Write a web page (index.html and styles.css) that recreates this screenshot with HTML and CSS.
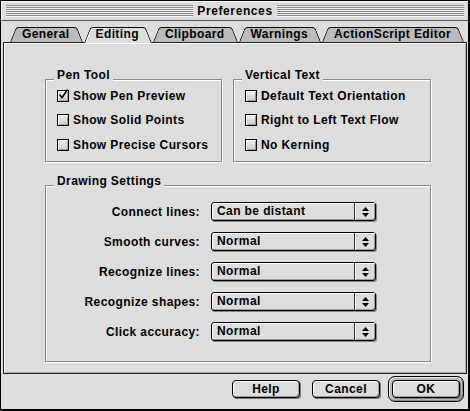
FILE: index.html
```html
<!DOCTYPE html>
<html lang="en">
<head>
    <meta charset="UTF-8">
    <title>Preferences</title>
    <link rel="stylesheet" href="styles.css">
</head>
<body>
    <div class="window">
        <div class="titlebar">
            <div class="stripes"></div>
            <div class="window-title">Preferences</div>
            <div class="stripes"></div>
        </div>

        <div class="tabs">
            <div class="tab">General</div>
            <div class="tab active">Editing</div>
            <div class="tab">Clipboard</div>
            <div class="tab">Warnings</div>
            <div class="tab">ActionScript Editor</div>
        </div>

        <div class="pane">
            <div class="group-row">
                <div class="group pen-tool">
                    <div class="group-title">Pen Tool</div>
                    <div class="checks">
                        <div class="check">
                            <span class="box">
                                <svg width="12" height="12" viewBox="0 0 12 12"><path d="M2.5 5.5 L5 8.7 L10.5 0.5" fill="none" stroke="#000" stroke-width="1.6"/></svg>
                            </span>
                            Show Pen Preview
                        </div>
                        <div class="check"><span class="box"></span>Show Solid Points</div>
                        <div class="check"><span class="box"></span>Show Precise Cursors</div>
                    </div>
                </div>
                <div class="group vertical-text">
                    <div class="group-title">Vertical Text</div>
                    <div class="checks">
                        <div class="check"><span class="box"></span>Default Text Orientation</div>
                        <div class="check"><span class="box"></span>Right to Left Text Flow</div>
                        <div class="check"><span class="box"></span>No Kerning</div>
                    </div>
                </div>
            </div>

            <div class="group drawing">
                <div class="group-title">Drawing Settings</div>
                <div class="settings">
                    <div class="setting-label">Connect lines:</div>
                    <div class="popup"><span class="popup-value">Can be distant</span><span class="popup-arrows"><svg width="7" height="10" viewBox="0 0 7 10"><path d="M3.5 0 L7 4 L0 4 Z M0 6 L7 6 L3.5 10 Z" fill="#000"/></svg></span></div>

                    <div class="setting-label">Smooth curves:</div>
                    <div class="popup"><span class="popup-value">Normal</span><span class="popup-arrows"><svg width="7" height="10" viewBox="0 0 7 10"><path d="M3.5 0 L7 4 L0 4 Z M0 6 L7 6 L3.5 10 Z" fill="#000"/></svg></span></div>

                    <div class="setting-label">Recognize lines:</div>
                    <div class="popup"><span class="popup-value">Normal</span><span class="popup-arrows"><svg width="7" height="10" viewBox="0 0 7 10"><path d="M3.5 0 L7 4 L0 4 Z M0 6 L7 6 L3.5 10 Z" fill="#000"/></svg></span></div>

                    <div class="setting-label">Recognize shapes:</div>
                    <div class="popup"><span class="popup-value">Normal</span><span class="popup-arrows"><svg width="7" height="10" viewBox="0 0 7 10"><path d="M3.5 0 L7 4 L0 4 Z M0 6 L7 6 L3.5 10 Z" fill="#000"/></svg></span></div>

                    <div class="setting-label">Click accuracy:</div>
                    <div class="popup"><span class="popup-value">Normal</span><span class="popup-arrows"><svg width="7" height="10" viewBox="0 0 7 10"><path d="M3.5 0 L7 4 L0 4 Z M0 6 L7 6 L3.5 10 Z" fill="#000"/></svg></span></div>
                </div>
            </div>
        </div>

        <div class="footer">
            <button class="btn help">Help</button>
            <button class="btn cancel">Cancel</button>
            <div class="default-ring"><button class="btn">OK</button></div>
        </div>
    </div>
</body>
</html>
```

FILE: styles.css
```css
/* Platinum style preferences dialog */
* {
    box-sizing: border-box;
}
body {
    margin: 0;
    background-color: #dddddd;
    font-family: "Liberation Sans", Arial, sans-serif;
    font-size: 12px;
    font-weight: bold;
    letter-spacing: 0.4px;
    color: #000;
}
.window {
    width: 470px;
    height: 411px;
    border: 1px solid #000;
    border-right-width: 2px;
    border-bottom-width: 2px;
    background-color: #dddddd;
    display: flex;
    flex-direction: column;
}

/* title bar */
.titlebar {
    height: 20px;
    flex: none;
    display: flex;
    align-items: center;
    gap: 4px;
    padding: 0 4px 0 5px;
    border-bottom: 1px solid #555;
    box-shadow: inset 1px 1px 0 #fff;
}
.stripes {
    flex: 1;
    height: 12px;
    background: repeating-linear-gradient(to bottom, #8a8a8a 0 1px, #f2f2f2 1px 2px);
}
.window-title {
    letter-spacing: 0.6px;
}

/* tabs */
.tabs {
    height: 21px;
    flex: none;
    display: flex;
    align-items: flex-end;
    gap: 1px;
    padding-left: 9px;
    position: relative;
    z-index: 1;
}
.tab {
    position: relative;
    height: 15px;
    line-height: 15px;
    padding: 0 13px 0 12px;
}
.tab::before,
.tab::after {
    content: "";
    position: absolute;
    top: 0;
    bottom: 0;
    width: 55%;
    background-color: #bbbbbb;
    border-top: 1px solid #000;
    z-index: -1;
}
.tab::before {
    left: 0;
    border-left: 1px solid #000;
    border-top-left-radius: 3px;
    transform: skewX(-21.8deg);
    transform-origin: bottom left;
}
.tab::after {
    right: 0;
    border-right: 1px solid #000;
    border-top-right-radius: 3px;
    transform: skewX(21.8deg);
    transform-origin: bottom right;
}
.tab.active {
    height: 16px;
    margin-bottom: -1px;
}
.tab.active::before,
.tab.active::after {
    background-color: #dddddd;
}
.tab.active::before {
    box-shadow: inset 1px 1px 0 #fff;
}

/* pane */
.pane {
    height: 332px;
    flex: none;
    margin: 0 1px 0 2px;
    border: 1px solid #222;
    box-shadow: inset 1px 1px 0 #fff, inset -1px -1px 0 #aaa;
    padding: 36px 0 0 41px;
}
.group-row {
    display: flex;
    gap: 11px;
}
.group {
    border: 1px solid #888;
    box-shadow: 1px 1px 0 #fff, inset 1px 1px 0 #fff;
    display: flex;
    flex-direction: column;
}
.group-title {
    align-self: flex-start;
    margin: -12px 0 0 8px;
    padding: 0 3px;
    line-height: 14px;
    background-color: #dddddd;
}
.pen-tool {
    width: 177px;
    height: 83px;
}
.vertical-text {
    width: 198px;
    height: 83px;
}
.checks {
    margin: 2px 0 0 11px;
}
.check {
    height: 24px;
    display: flex;
    align-items: center;
    gap: 4px;
}
.check:last-child {
    margin-top: 1px;
}
.box {
    width: 12px;
    height: 12px;
    border: 1px solid #000;
    background: linear-gradient(#eeeeee, #cccccc);
    box-shadow: inset 1px 1px 0 #fff, inset -1px -1px 0 #999;
    display: flex;
    overflow: visible;
}
.box svg {
    margin: -2px 0 0 -1px;
    flex: none;
}

/* drawing settings */
.drawing {
    width: 386px;
    height: 177px;
    margin-top: 23px;
}
.settings {
    display: grid;
    grid-template-columns: 154px 165px;
    column-gap: 11px;
    row-gap: 10px;
    margin-top: 14px;
}
.setting-label {
    text-align: right;
    line-height: 20px;
}
.popup {
    height: 19px;
    display: flex;
    border: 1px solid #000;
    border-radius: 3px;
    background-color: #dddddd;
    box-shadow: inset 1px 1px 0 #fff, inset -1px -1px 0 #999, 1px 1px 0 #888;
}
.popup-value {
    flex: 1;
    padding-left: 5px;
    line-height: 17px;
}
.popup-arrows {
    width: 21px;
    border-left: 1px solid #333;
    display: flex;
    align-items: center;
    justify-content: center;
    box-shadow: inset 1px 1px 0 #fff;
}

/* buttons */
.footer {
    flex: 1;
    display: flex;
    justify-content: flex-end;
    align-items: center;
    padding: 0 4px 5px 0;
}
.btn {
    width: 68px;
    height: 18px;
    padding: 0;
    border: 1px solid #000;
    border-radius: 4px;
    background-color: #dddddd;
    box-shadow: inset 1px 1px 0 #fff, inset -1px -1px 0 #999, 1px 1px 0 #777;
    font: inherit;
    letter-spacing: inherit;
    color: #000;
}
.help {
    margin-right: 12px;
}
.cancel {
    margin-right: 8px;
}
.default-ring {
    display: flex;
    padding: 3px;
    border: 1px solid #000;
    border-radius: 7px;
    background-color: #bbbbbb;
    box-shadow: inset 1px 1px 0 #eee, inset -1px -1px 0 #888;
}
```
